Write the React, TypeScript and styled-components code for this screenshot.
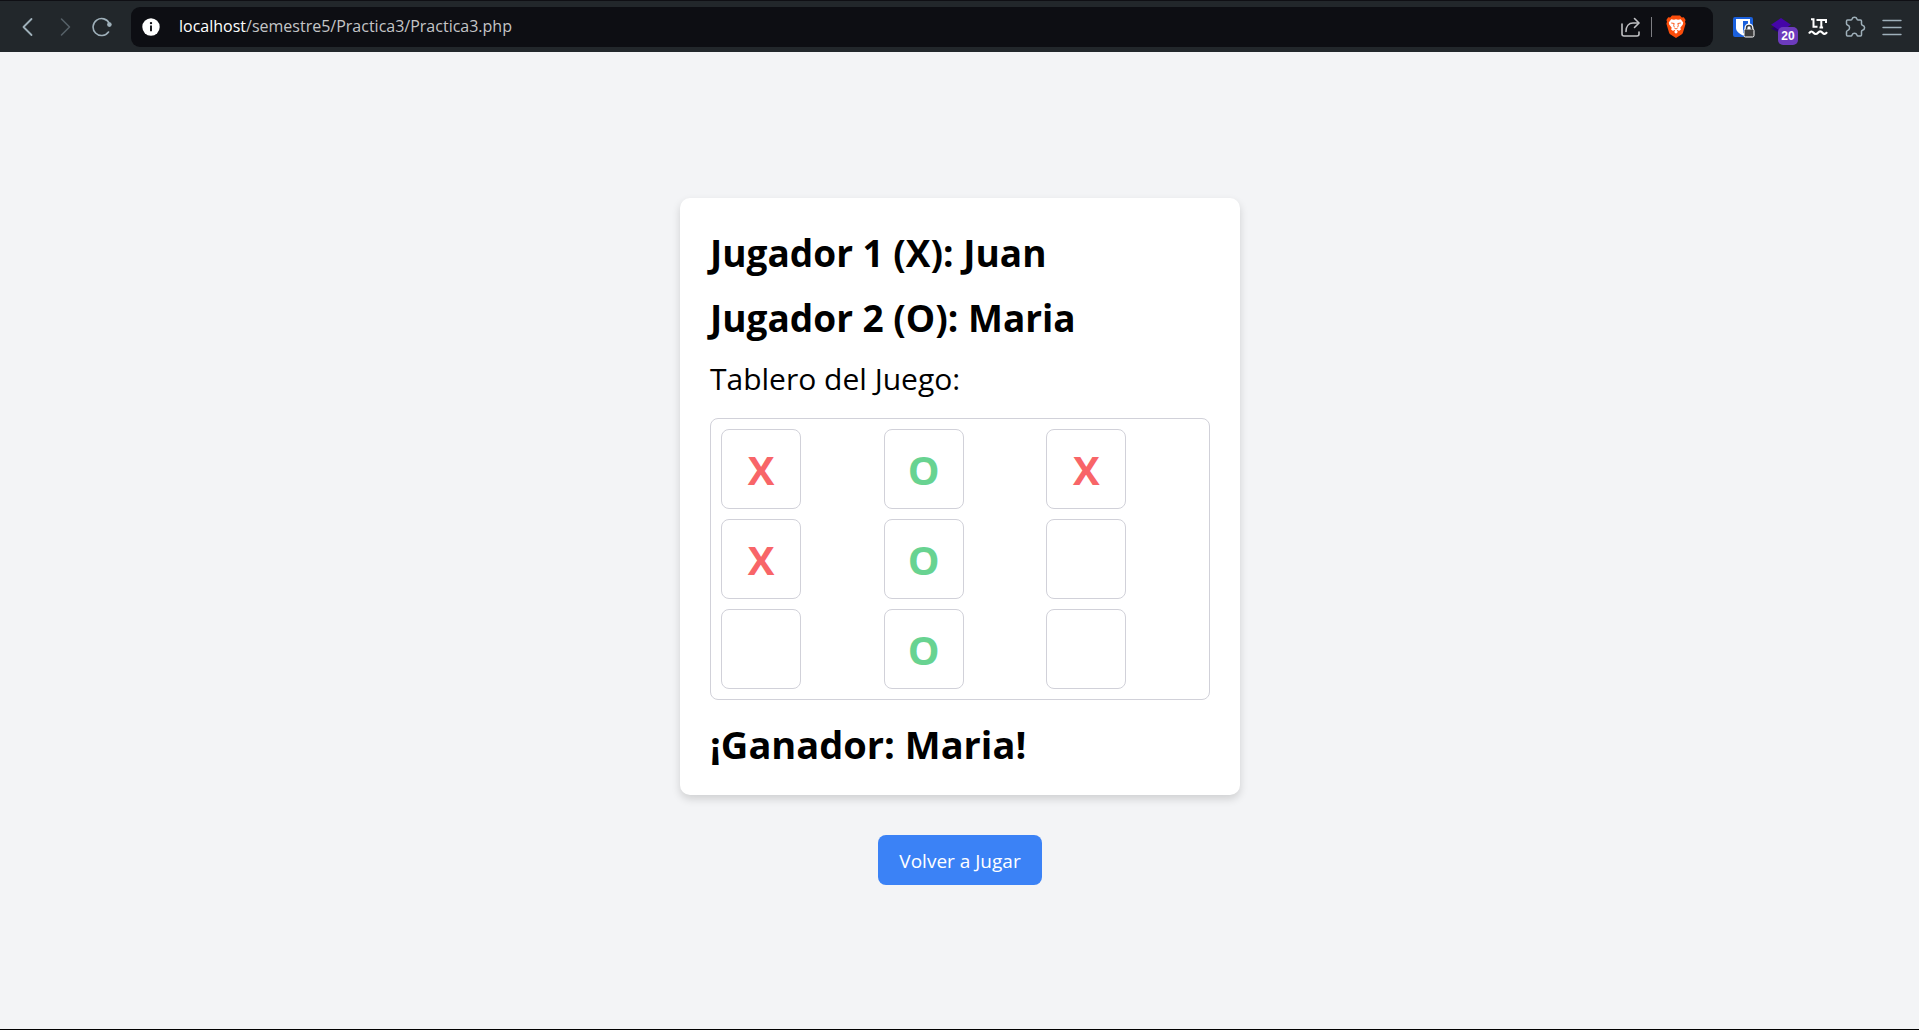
import React from "react";
import styled, { createGlobalStyle } from "styled-components";

const GlobalStyle = createGlobalStyle`
  * { box-sizing: border-box; }
  body {
    margin: 0;
    background: #f3f4f6;
    color: #000;
    font-family: "Open Sans", "Noto Sans", sans-serif;
  }
`;

const Window = styled.div`
  min-height: 100vh;
  display: flex;
  flex-direction: column;
  border-bottom: 1px solid #000;
`;

const Toolbar = styled.header`
  display: flex;
  align-items: center;
  height: 52px;
  padding: 0 14px;
  background: #22272b;
  border-top: 1px solid #0f0f14;
`;

const NavGroup = styled.nav`
  display: flex;
  gap: 10px;
  margin-right: 16px;
`;

const IconButton = styled.button<{ $color?: string }>`
  display: grid;
  place-items: center;
  width: 27px;
  height: 28px;
  padding: 0;
  border: 0;
  background: none;
  color: ${(p) => p.$color ?? "#9fb0ba"};
  svg { display: block; }
`;

const AddressBar = styled.div`
  display: flex;
  align-items: center;
  flex: 1;
  height: 40px;
  padding: 0 24px 0 11px;
  border-radius: 9px;
  background: #0d0e13;
`;

const Address = styled.a`
  flex: 1;
  margin-left: 19px;
  padding-bottom: 2px;
  font-size: 16px;
  line-height: 24px;
  color: #c4c5c7;
  text-decoration: none;
`;

const Host = styled.span`
  color: #fff;
`;

const Divider = styled.span`
  width: 1px;
  height: 20px;
  margin: 0 10px 0 7px;
  background: #7d7e83;
`;

const Extensions = styled.div`
  display: flex;
  gap: 10px;
  margin-left: 17px;
`;

const BadgeButton = styled(IconButton)`
  position: relative;
`;

const Badge = styled.span`
  position: absolute;
  left: 11px;
  top: 14px;
  width: 20px;
  height: 18px;
  border-radius: 5px;
  background: #6d3bbd;
  color: #fff;
  font-size: 12px;
  font-weight: 700;
  line-height: 18px;
  text-align: center;
`;

const Main = styled.main`
  flex: 1;
  display: flex;
  flex-direction: column;
  align-items: center;
  justify-content: center;
  gap: 40px;
  padding: 2px 0 0 1px;
`;

const Card = styled.section`
  width: 100%;
  max-width: 560px;
  padding: 30px;
  border-radius: 10px;
  background: #fff;
  box-shadow: 0 4px 8px rgba(0, 0, 0, 0.15);
`;

const Player = styled.h1`
  margin: 0 0 15px;
  font-size: 37px;
  font-weight: 700;
  line-height: 50px;
`;

const BoardTitle = styled.h2`
  margin: 0 0 18px;
  font-size: 30px;
  font-weight: 500;
  line-height: 42px;
`;

const Board = styled.div`
  display: grid;
  grid-template-columns: repeat(3, 1fr);
  gap: 10px;
  padding: 10px;
  border: 1px solid #d1d1d9;
  border-radius: 8px;
`;

const Cell = styled.div<{ $mark: string }>`
  display: grid;
  place-items: center;
  width: 80px;
  height: 80px;
  padding-top: 2px;
  border: 1px solid #d1d1d9;
  border-radius: 8px;
  font-size: 40px;
  font-weight: 700;
  line-height: 48px;
  color: ${(p) => (p.$mark === "X" ? "#f86568" : "#68d391")};
`;

const Winner = styled.h2`
  margin: 23px 0 0;
  font-size: 38px;
  font-weight: 700;
  line-height: 42px;
`;

const PlayAgain = styled.button`
  padding: 11px 21px 9px;
  border: 0;
  border-radius: 8px;
  background: #3b82f6;
  color: #fff;
  font-family: inherit;
  font-size: 19px;
  line-height: 30px;
`;

const marks = ["X", "O", "X", "X", "O", "", "", "O", ""];

const stroke = {
  fill: "none",
  stroke: "currentColor",
  strokeLinecap: "round" as const,
  strokeLinejoin: "round" as const,
};

const BackIcon = () => (
  <svg width="20" height="20" viewBox="0 0 20 20" {...stroke} strokeWidth="1.8">
    <path d="M13.5 2 5.5 10l8 8" />
  </svg>
);

const ForwardIcon = () => (
  <svg width="20" height="20" viewBox="0 0 20 20" {...stroke} strokeWidth="1.6">
    <path d="M6.5 2l8 8-8 8" />
  </svg>
);

const ReloadIcon = () => (
  <svg width="20" height="20" viewBox="0 0 20 20" {...stroke} strokeWidth="1.6">
    <path d="M16.500 15A8.500 8.500 0 1 1 17.300 6.500" />
    <circle cx="17.400" cy="7.600" r="2.300" fill="currentColor" stroke="none" />
  </svg>
);

const InfoIcon = () => (
  <svg width="18" height="18" viewBox="0 0 18 18">
    <circle cx="9" cy="9" r="8.700" fill="#fff" />
    <path d="M9 7.500v5.800" fill="none" stroke="#0d0e13" strokeWidth="1.900" />
    <circle cx="9" cy="5.100" r="1.200" fill="#0d0e13" />
  </svg>
);

const ShareIcon = () => (
  <svg width="20" height="20" viewBox="0 0 20 20" {...stroke} strokeWidth="1.6">
    <path d="M1 7v10a2 2 0 0 0 2 2h13a2 2 0 0 0 2-2v-2" />
    <path d="M5 14.500C5 9 8 6 12 6h5.500" />
    <path d="M13.500 1.500 18 6l-4.500 4.500" />
  </svg>
);

const BraveIcon = () => (
  <svg width="20" height="23" viewBox="0 0 20 23">
    <path
      d="M6 .5h8l1.800 2 2-.2L19.600 5l-.6 1.800.6 2L17 17.500c-.3 1-.8 1.500-1.500 2L10 23l-5.500-3.500C3.800 19 3.300 18.500 3 17.500L.4 8.800l.6-2L.4 5l1.800-2.700 2 .2z"
      fill="#fb4d0b"
    />
    <path
      d="M5.200 4.200 8 4.700l2-.5 2 .5 2.800-.5L17.200 7.500l-.4 2-2.500 3.200.6 1.800-2 1.400-1-1-1.200.5 1.200 1.500L10 18.700 8.100 16.900l1.200-1.500-1.200-.5-1 1-2-1.400.6-1.800L3.200 9.500l-.4-2z"
      fill="#fff"
    />
    <path
      d="m5.200 8 3 .5-.5 1.800.6 2M14.800 8l-3 .5.5 1.800-.6 2M8.500 13.300l1.500.6 1.500-.6"
      fill="none"
      stroke="#fb4d0b"
      strokeWidth="0.900"
    />
  </svg>
);

const VaultIcon = () => (
  <svg width="22" height="22" viewBox="0 0 22 22">
    <rect x="0" y="1" width="20" height="20" rx="2" fill="#1b60dc" />
    <path d="M3 3h14v9c0 3-3 5.500-7 7.500C6 17.500 3 15 3 12z" fill="#fff" />
    <path d="M10 5h5v7c0 2-2 3.800-5 5.500z" fill="#1b60dc" />
    <path d="M13 14v-2a3 3 0 0 1 6 0v2" fill="none" stroke="#fff" strokeWidth="3" />
    <rect x="11" y="13" width="10" height="8" rx="1.500" fill="#3c3c3c" stroke="#fff" />
    <path d="M13.500 13.500v-1.600a2.500 2.500 0 0 1 5 0v1.600" fill="none" stroke="#3c3c3c" strokeWidth="1.500" />
  </svg>
);

const LayersIcon = () => (
  <svg width="22" height="20" viewBox="0 0 22 20">
    <path d="M1 11.500 11 7l10 4.500-10 5z" fill="#24006b" />
    <path d="M11 1l10 6.800-10 6.600L1 7.800z" fill="#4505a8" />
  </svg>
);

const LanguageToolIcon = () => (
  <svg width="20" height="18" viewBox="0 0 20 18" fill="none" stroke="#fff">
    <path d="M3 1.200h2.500v7.500h4M8.500 2h9.500v3M13.300 2v7.500M11.500 9.500h3.600" strokeWidth="2" />
    <path d="M1 15.500c1.500-2.500 3-2.500 4.500-.8s3 1.700 4.500 0 3-1.700 4.500 0 3 1.700 4.500-.5" strokeWidth="2.200" />
  </svg>
);

const PuzzleIcon = () => (
  <svg width="22" height="22" viewBox="0 0 22 22" {...stroke} strokeWidth="1.5">
    <path d="M3.500 4H7c.6 0 1-.4 1.100-1C8.400 1.800 9.400 1.200 10.500 1.200S12.600 1.800 12.900 3c.1.600.5 1 1.100 1h2.500a1 1 0 0 1 1 1v3c0 .600.4 1 1 1.200 1.400.4 2.100 1.400 2.100 2.500s-.7 2.100-2.100 2.500c-.6.200-1 .6-1 1.200V19a1 1 0 0 1-1 1H14c-.6 0-.9-.4-1.100-1-.4-1.200-1.300-1.800-2.400-1.800S8.500 17.800 8.100 19c-.2.600-.5 1-1.100 1H3.500a1 1 0 0 1-1-1v-3.200c0-.6.4-1 1-1.200 1.400-.5 2.100-1.500 2.100-2.800S4.900 9.500 3.500 9c-.6-.2-1-.6-1-1.200V5a1 1 0 0 1 1-1z" />
  </svg>
);

const MenuIcon = () => (
  <svg width="20" height="20" viewBox="0 0 20 20" {...stroke} strokeWidth="1.400">
    <path d="M1 3.500h18M1 10.500h18M1 17.500h18" />
  </svg>
);

export default function App() {
  return (
    <Window>
      <GlobalStyle />
      <Toolbar>
        <NavGroup>
          <IconButton aria-label="Atrás"><BackIcon /></IconButton>
          <IconButton aria-label="Adelante" $color="#566067"><ForwardIcon /></IconButton>
          <IconButton aria-label="Recargar"><ReloadIcon /></IconButton>
        </NavGroup>
        <AddressBar>
          <InfoIcon />
          <Address href="#"><Host>localhost</Host>/semestre5/Practica3/Practica3.php</Address>
          <IconButton aria-label="Compartir" $color="#c0c1c4"><ShareIcon /></IconButton>
          <Divider />
          <IconButton aria-label="Brave Shields"><BraveIcon /></IconButton>
        </AddressBar>
        <Extensions>
          <IconButton aria-label="Bitwarden"><VaultIcon /></IconButton>
          <BadgeButton aria-label="Capas">
            <LayersIcon />
            <Badge>20</Badge>
          </BadgeButton>
          <IconButton aria-label="LanguageTool"><LanguageToolIcon /></IconButton>
          <IconButton aria-label="Extensiones"><PuzzleIcon /></IconButton>
          <IconButton aria-label="Menú"><MenuIcon /></IconButton>
        </Extensions>
      </Toolbar>
      <Main>
        <Card>
          <Player>Jugador 1 (X): Juan</Player>
          <Player>Jugador 2 (O): Maria</Player>
          <BoardTitle>Tablero del Juego:</BoardTitle>
          <Board>
            {marks.map((mark, i) => (
              <Cell key={i} $mark={mark}>{mark}</Cell>
            ))}
          </Board>
          <Winner>¡Ganador: Maria!</Winner>
        </Card>
        <PlayAgain>Volver a Jugar</PlayAgain>
      </Main>
    </Window>
  );
}
